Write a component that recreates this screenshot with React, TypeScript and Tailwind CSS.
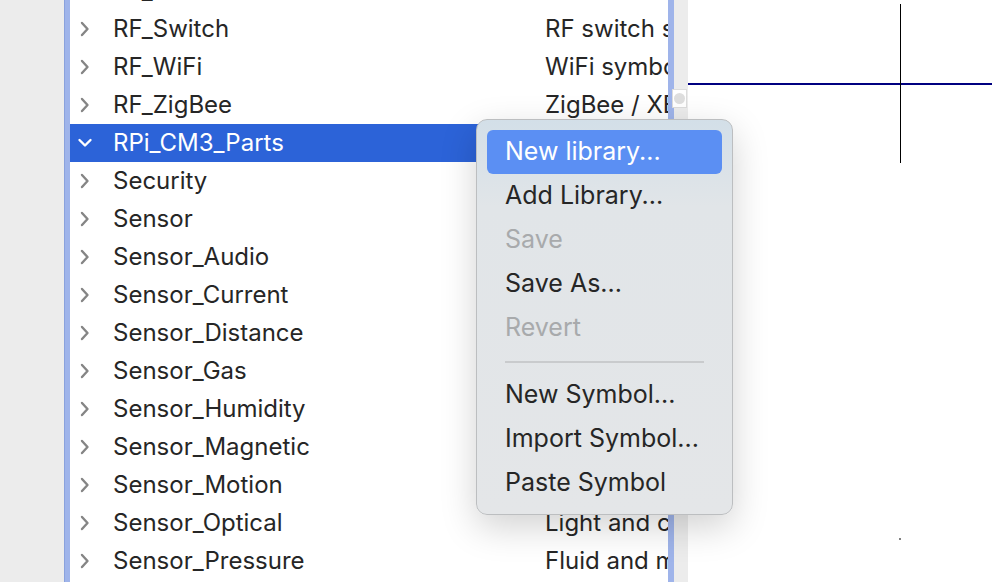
const rows: { name: string; desc: string; open?: boolean }[] = [
  { name: "RF_RFID", desc: "RFID reader symbols" },
  { name: "RF_Switch", desc: "RF switch symbols" },
  { name: "RF_WiFi", desc: "WiFi symbols" },
  { name: "RF_ZigBee", desc: "ZigBee / XBee symbols" },
  { name: "RPi_CM3_Parts", desc: "", open: true },
  { name: "Security", desc: "" },
  { name: "Sensor", desc: "" },
  { name: "Sensor_Audio", desc: "" },
  { name: "Sensor_Current", desc: "" },
  { name: "Sensor_Distance", desc: "" },
  { name: "Sensor_Gas", desc: "" },
  { name: "Sensor_Humidity", desc: "" },
  { name: "Sensor_Magnetic", desc: "" },
  { name: "Sensor_Motion", desc: "" },
  { name: "Sensor_Optical", desc: "Light and color sensors" },
  { name: "Sensor_Pressure", desc: "Fluid and mechanical pressure sensors" },
];

const menu: ({ label: string; disabled?: boolean; active?: boolean } | "sep")[] = [
  { label: "New library...", active: true },
  { label: "Add Library..." },
  { label: "Save", disabled: true },
  { label: "Save As..." },
  { label: "Revert", disabled: true },
  "sep",
  { label: "New Symbol..." },
  { label: "Import Symbol..." },
  { label: "Paste Symbol" },
];

function Chevron({ open }: { open?: boolean }) {
  return (
    <svg width="18" height="18" viewBox="0 0 18 18" className="shrink-0">
      {open ? (
        <path d="M3.5 6 L9 11.5 L14.5 6" fill="none" stroke="#ffffff" strokeWidth="2.4" strokeLinecap="round" strokeLinejoin="round" />
      ) : (
        <path d="M6 3 L11.5 9 L6 15" fill="none" stroke="#858585" strokeWidth="2.4" strokeLinecap="round" strokeLinejoin="round" />
      )}
    </svg>
  );
}

export default function App() {
  return (
    <div className="relative w-[992px] h-[582px] overflow-hidden bg-white flex font-['Inter','Noto_Sans',sans-serif]">
      <div className="w-[64px] bg-[#ececec]" />
      <div className="w-[6px] bg-[#9fb4ea] border-l border-[#8aa2dd]" />

      {/* library tree */}
      <div className="w-[598px] overflow-hidden">
        <div className="-mt-[28px]">
          {rows.map((r) => (
            <div
              key={r.name}
              className={`h-[38px] flex items-center text-[24px] ${
                r.open ? "bg-[#2c63d8] text-white" : "text-[#262626]"
              }`}
            >
              <div className="w-[43px] pl-[6px] flex items-center">
                <Chevron open={r.open} />
              </div>
              <div className="w-[432px] whitespace-nowrap">{r.name}</div>
              <div className="flex-1 whitespace-nowrap overflow-hidden">{r.desc}</div>
            </div>
          ))}
        </div>
      </div>

      <div className="w-[6px] bg-[#9fb4ea]" />
      <div className="relative w-[14px] bg-[#ececec]">
        <div className="absolute left-[-2px] top-[89px] w-[15px] h-[19px] bg-white border border-[#dcdcdc] flex items-center justify-center">
          <div className="w-[11px] h-[11px] rounded-full bg-[#dedede]" />
        </div>
      </div>

      {/* symbol canvas */}
      <div className="relative flex-1 bg-white">
        <div className="absolute left-0 right-0 top-[83px] h-[2px] bg-[#000080]" />
        <div className="absolute left-[212px] top-[4px] w-px h-[159px] bg-black" />
        <div className="absolute left-[211px] top-[538px] w-[2px] h-[2px] bg-[#808080]" />
      </div>

      {/* context menu */}
      <div className="absolute left-[476px] top-[119px] w-[257px] h-[396px] rounded-[11px] border border-[#bcbec0] bg-[linear-gradient(180deg,#d3dfe8_0%,#e1e5e8_22%,#e4e6e8_100%)] shadow-[0_12px_36px_rgba(0,0,0,0.18)] px-[10px] pt-[10px]">
        {menu.map((m, i) =>
          m === "sep" ? (
            <div key={i} className="h-[23px] flex items-center px-[18px]">
              <div className="h-[2px] w-full bg-[#c9cbcd]" />
            </div>
          ) : (
            <div
              key={i}
              className={`h-[44px] flex items-center pl-[18px] text-[25px] rounded-[6px] ${
                m.active ? "bg-[#5b8ff3] text-white" : m.disabled ? "text-[#a8aaac]" : "text-[#262626]"
              }`}
            >
              {m.label}
            </div>
          )
        )}
      </div>
    </div>
  );
}
